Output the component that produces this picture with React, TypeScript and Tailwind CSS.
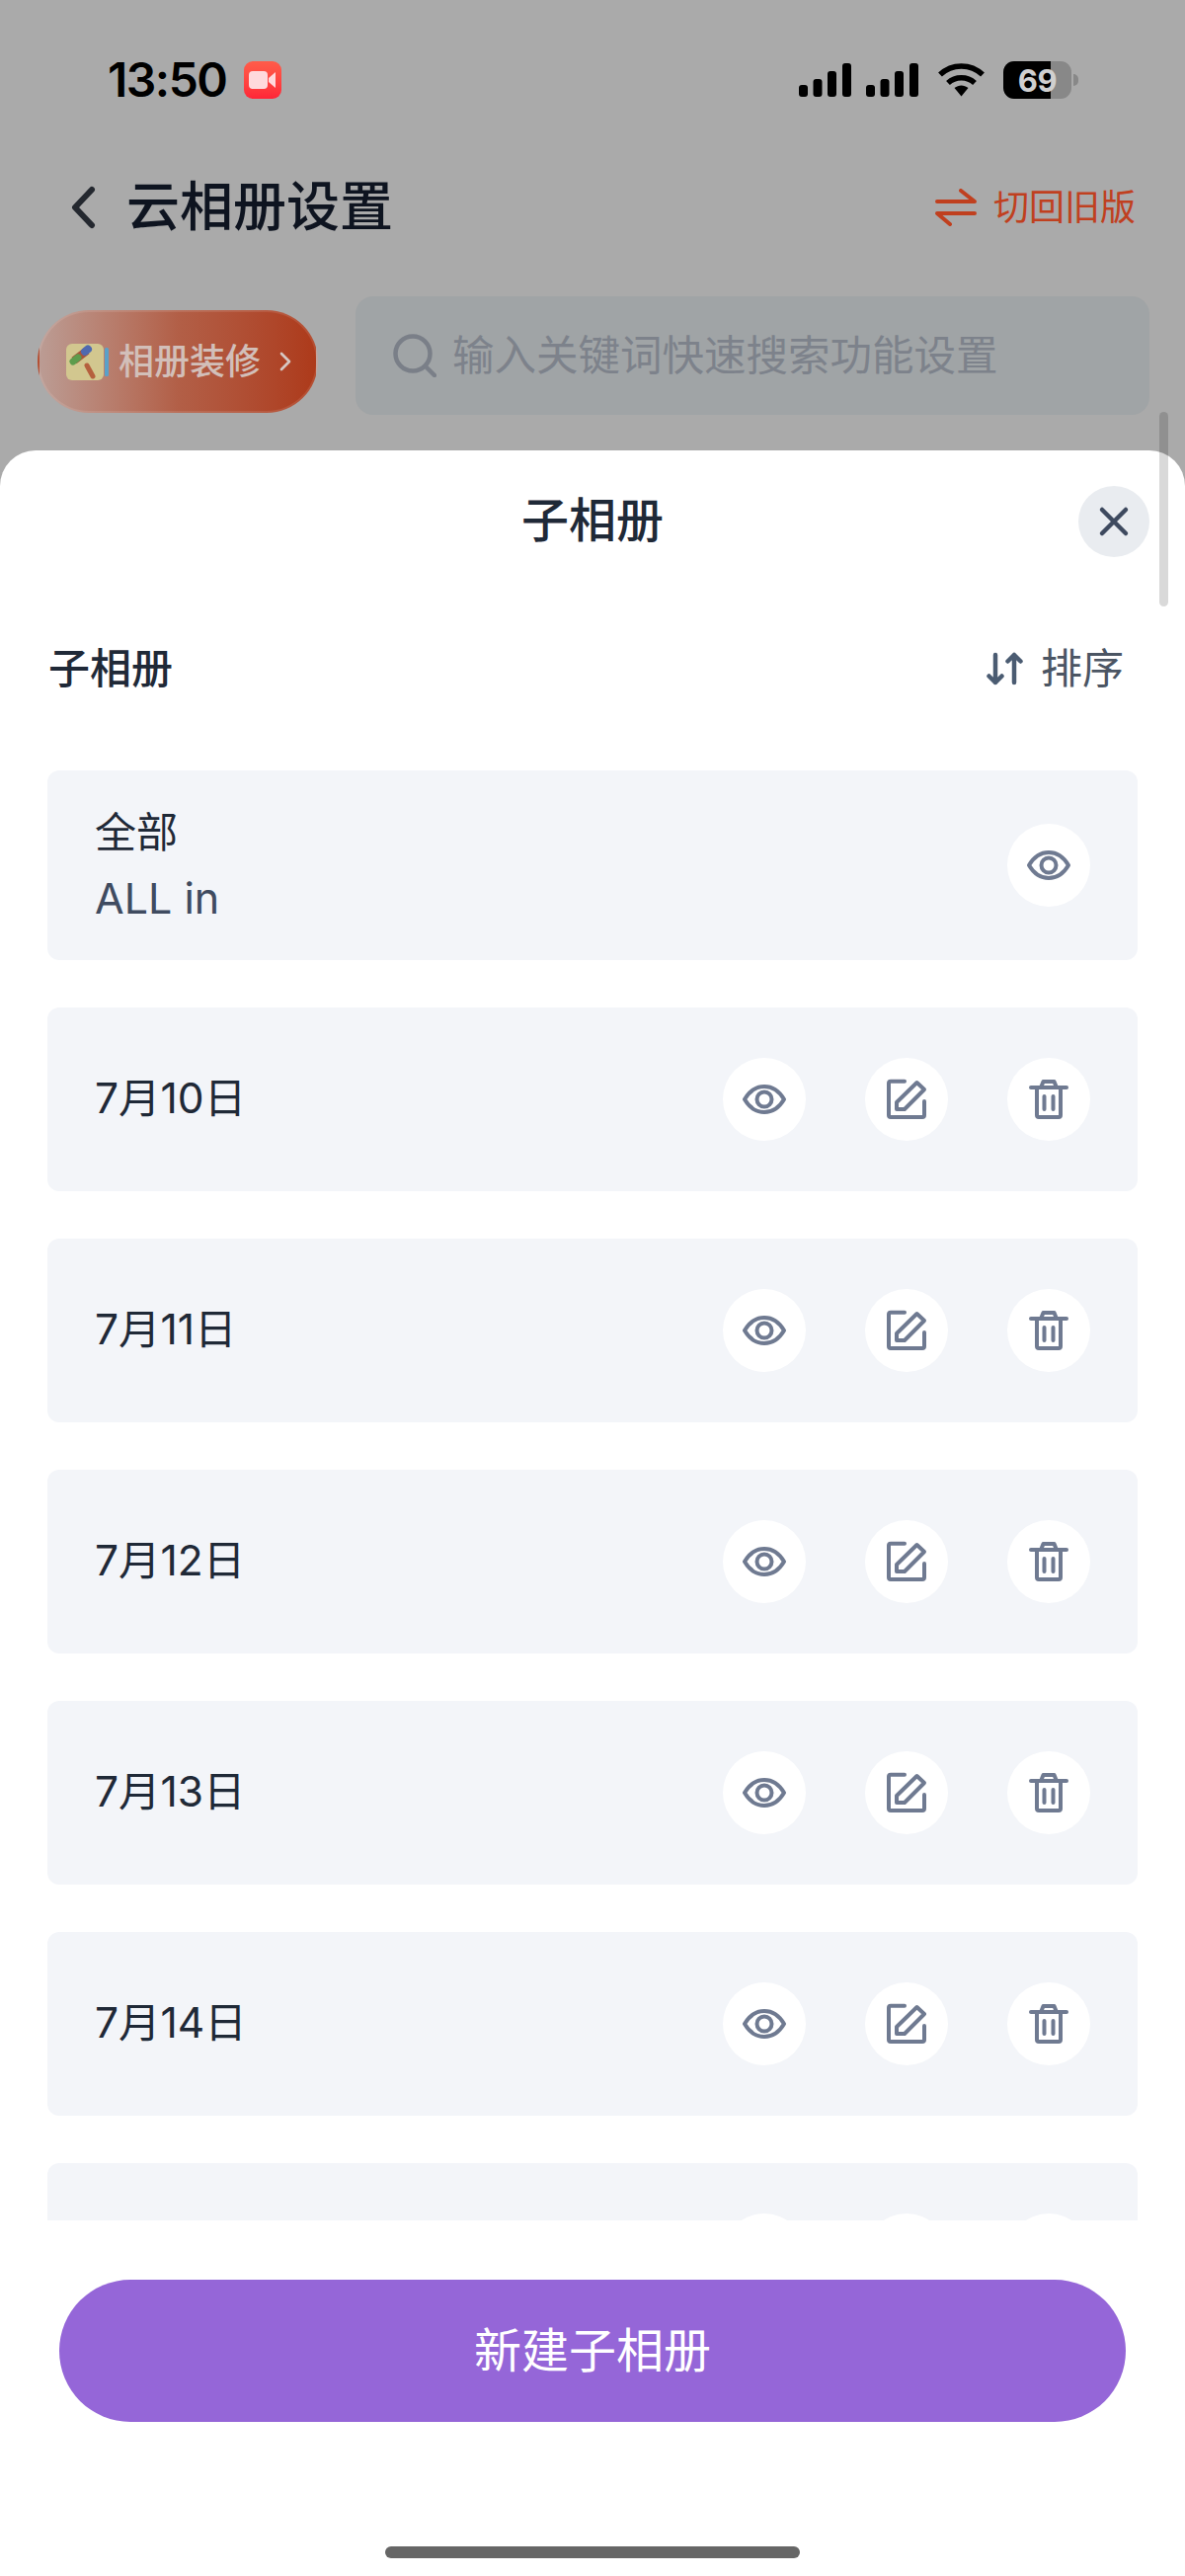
import { ChevronRight } from 'lucide-react';

// last row is only peeking out above the button, its label is scrolled out of view
const ALBUMS = ['7月10日', '7月11日', '7月12日', '7月13日', '7月14日', ''];

function EyeIcon() {
  return (
    <svg width="48" height="48" viewBox="0 0 48 48" fill="none" stroke="#6f7a91" strokeWidth="4" strokeLinejoin="round">
      <path d="M4 24C9 15.5 15.5 11 24 11C32.5 11 39 15.5 44 24C39 32.5 32.5 37 24 37C15.5 37 9 32.5 4 24Z" />
      <circle cx="24" cy="24" r="7.5" />
    </svg>
  );
}

function EditIcon() {
  return (
    <svg width="48" height="48" viewBox="0 0 48 48" fill="none" stroke="#6f7a91" strokeWidth="4" strokeLinecap="round" strokeLinejoin="round">
      <path d="M22 5.75H8a2 2 0 0 0-2 2V40a2 2 0 0 0 2 2H40a2 2 0 0 0 2-2V26" />
      <path d="M14 34V27L34.5 7L42 14L22 34Z" />
    </svg>
  );
}

function TrashIcon() {
  return (
    <svg width="48" height="48" viewBox="0 0 48 48" fill="none" stroke="#6f7a91" strokeWidth="4" strokeLinecap="round" strokeLinejoin="round">
      <path d="M6 12H42" />
      <path d="M16.5 11L18.5 6H29.5L31.5 11" />
      <path d="M12 13V40a2 2 0 0 0 2 2H34a2 2 0 0 0 2-2V13" />
      <path d="M19.5 21V34" />
      <path d="M28.5 21V34" />
    </svg>
  );
}

function IconButton({ children }: { children: React.ReactNode }) {
  return <div className="flex h-[84px] w-[84px] items-center justify-center rounded-full bg-white">{children}</div>;
}

function SignalBars() {
  return (
    <svg width="53" height="34" viewBox="0 0 53 34" fill="#000">
      <rect x="0" y="22" width="9" height="12" rx="3" />
      <rect x="14.5" y="16" width="9" height="18" rx="3" />
      <rect x="29" y="8" width="9" height="26" rx="3" />
      <rect x="44" y="0" width="9" height="34" rx="3" />
    </svg>
  );
}

function StatusBar() {
  return (
    <div className="flex h-[38px] items-center justify-between pl-[109px] pr-[108px]">
      <div className="flex items-center gap-[17px]">
        <span className="font-['Inter',sans-serif] text-[48px] font-semibold leading-none tracking-[-1.5px] text-black">13:50</span>
        <div className="flex h-[38px] w-[38px] items-center justify-center rounded-[9px] bg-gradient-to-b from-[#ff5c4a] to-[#ff2438]">
          <svg width="28" height="20" viewBox="0 0 28 20">
            <rect x="0" y="1" width="19" height="18" rx="4" fill="#ffd9dc" />
            <path d="M20 8L27 2V18L20 12Z" fill="#ffd9dc" />
          </svg>
        </div>
      </div>
      <div className="flex items-center">
        <SignalBars />
        <div className="ml-[15px]">
          <SignalBars />
        </div>
        <svg className="ml-[20px]" width="47" height="34" viewBox="0 0 47 34" fill="none" stroke="#000" strokeWidth="5.5">
          <path d="M2 11.5C14 0 33 0 45 11.5" />
          <path d="M10 20C17.5 13 29.5 13 37 20" />
          <path d="M16.5 25L23.5 33.5L30.5 25C26 21.5 21 21.5 16.5 25Z" fill="#000" stroke="none" />
        </svg>
        <div className="relative ml-[19px] flex h-[38px] w-[69px] items-center justify-center overflow-hidden rounded-[11px] bg-[#888888]">
          <div className="absolute inset-y-0 left-0 w-[48px] bg-black" />
          <span className="relative font-['Inter',sans-serif] text-[31px] font-bold leading-none tracking-[-0.5px] text-[#d0d0d0]">69</span>
        </div>
        <div className="ml-[2px] h-[12px] w-[5px] rounded-r-full bg-[#888888]" />
      </div>
    </div>
  );
}

function HammerBookIcon() {
  return (
    <svg width="43" height="37" viewBox="0 0 43 37">
      <rect x="39" y="4" width="4" height="29" rx="1.5" fill="#5aa0c8" />
      <rect x="0" y="0" width="38" height="37" rx="6" fill="#d2c78f" />
      <path d="M21 22L27 33" stroke="#b5603e" strokeWidth="5" strokeLinecap="round" />
      <path d="M8 17L21 7" stroke="#a8553a" strokeWidth="8" />
      <path d="M7 18L12 14" stroke="#5d9c4c" strokeWidth="7" strokeLinecap="round" />
      <path d="M19 8L22 5.5" stroke="#4f6ab0" strokeWidth="8" strokeLinecap="round" />
    </svg>
  );
}

function AlbumRow({ name }: { name: string }) {
  return (
    <div className="flex h-[186px] shrink-0 items-center justify-between rounded-[12px] bg-[#f3f5f9] px-[48px]">
      <span className="mt-[-2px] text-[42.5px] leading-none text-[#1f2937]">{name}</span>
      <div className="flex gap-[60px]">
        <IconButton><EyeIcon /></IconButton>
        <IconButton><EditIcon /></IconButton>
        <IconButton><TrashIcon /></IconButton>
      </div>
    </div>
  );
}

export default function App() {
  return (
    <div className="relative h-[2608px] w-full overflow-hidden bg-[#aaaaaa] pt-[62px] font-['Inter','Noto_Sans_CJK_SC',sans-serif]">
      <StatusBar />

      {/* Page header behind the sheet */}
      <div className="mt-[78px] flex h-[64px] items-center justify-between pl-[72px] pr-[50px]">
        <div className="flex items-center gap-[31px]">
          <svg width="25" height="44" viewBox="0 0 25 44" fill="none" stroke="#24282f" strokeWidth="6" strokeLinecap="round" strokeLinejoin="round">
            <path d="M21 4L4 22L21 40" />
          </svg>
          <span className="text-[54px] font-medium leading-none text-[#0e1420]">云相册设置</span>
        </div>
        <div className="flex items-center gap-[17px]">
          <svg width="42" height="38" viewBox="0 0 42 38" fill="none" stroke="#c0401f" strokeWidth="4" strokeLinecap="round" strokeLinejoin="round">
            <path d="M2 13H40L26 2" />
            <path d="M40 25H2L15 36" />
          </svg>
          <span className="text-[36px] leading-none text-[#c0401f]">切回旧版</span>
        </div>
      </div>

      {/* Decorate + search */}
      <div className="mt-[58px] flex items-start gap-[38px] pl-[38px] pr-[36px]">
        <div className="mt-[14px] flex h-[104px] w-[284px] items-center rounded-full border-[2px] border-white/10 bg-gradient-to-r from-[#bb9c94] via-[#b25f47] to-[#ad3a1a] pl-[27px]">
          <HammerBookIcon />
          <span className="ml-[10px] text-[36px] font-medium leading-none text-[#d2bfb9]">相册装修</span>
          <ChevronRight className="ml-[9px] h-[32px] w-[32px] text-[#d6c8c3]" strokeWidth={2} />
        </div>
        <div className="flex h-[120px] flex-1 items-center rounded-[18px] bg-[#a0a4a6] pl-[38px]">
          <svg width="44" height="44" viewBox="0 0 44 44" fill="none" stroke="#7a7f88" strokeWidth="4.5" strokeLinecap="round">
            <circle cx="20" cy="20" r="17.5" />
            <path d="M33 33L42 42" />
          </svg>
          <span className="ml-[16px] text-[42.5px] leading-none text-[#7d828b]">输入关键词快速搜索功能设置</span>
        </div>
      </div>

      {/* Bottom sheet */}
      <div className="absolute inset-x-0 bottom-0 top-[456px] flex flex-col rounded-t-[36px] bg-white">
        <div className="relative flex h-[142px] shrink-0 items-center justify-center">
          <span className="text-[48px] font-medium leading-none text-[#1f2937]">子相册</span>
          <div className="absolute right-[36px] top-[36px] flex h-[72px] w-[72px] items-center justify-center rounded-full bg-[#e9ecf0]">
            <svg width="32" height="32" viewBox="0 0 32 32" fill="none" stroke="#3e4a5f" strokeWidth="4.5" strokeLinecap="round">
              <path d="M4 4L28 28M28 4L4 28" />
            </svg>
          </div>
        </div>

        <div className="mb-[24px] flex h-[158px] shrink-0 items-center justify-between pl-[49px] pr-[62px]">
          <span className="text-[42px] font-medium leading-none text-[#1f2937]">子相册</span>
          <div className="flex items-center gap-[18px]">
            <svg width="38" height="34" viewBox="0 0 38 34" fill="none" stroke="#4b5c72" strokeWidth="4.5" strokeLinecap="round" strokeLinejoin="round">
              <path d="M10 3V31M3.5 24.5L10 31L16.5 24.5" />
              <path d="M29 31V3M22.5 9.5L29 3L35.5 9.5" />
            </svg>
            <span className="text-[42px] leading-none text-[#4b5563]">排序</span>
          </div>
        </div>

        <div className="mx-[48px] flex h-[1468px] shrink-0 flex-col gap-[48px] overflow-hidden">
          <div className="flex h-[192px] shrink-0 items-center justify-between rounded-[12px] bg-[#f3f5f9] px-[48px]">
            <div className="flex flex-col gap-[15px]">
              <span className="text-[42px] leading-[50px] text-[#1f2937]">全部</span>
              <span className="text-[43px] leading-[52px] text-[#3f4b60]">ALL in</span>
            </div>
            <IconButton><EyeIcon /></IconButton>
          </div>
          {ALBUMS.map((name, i) => (
            <AlbumRow key={i} name={name} />
          ))}
        </div>

        <div className="mx-[60px] mt-[60px] flex h-[144px] shrink-0 items-center justify-center rounded-full bg-[#9566d8]">
          <span className="text-[48px] leading-none text-white">新建子相册</span>
        </div>

        <div className="mx-auto mt-[126px] h-[12px] w-[420px] rounded-full bg-[#666666]" />
      </div>

      {/* Scrollbar overlay */}
      <div className="absolute right-[17px] top-[417px] h-[197px] w-[9px] rounded-full bg-black/15" />
    </div>
  );
}
